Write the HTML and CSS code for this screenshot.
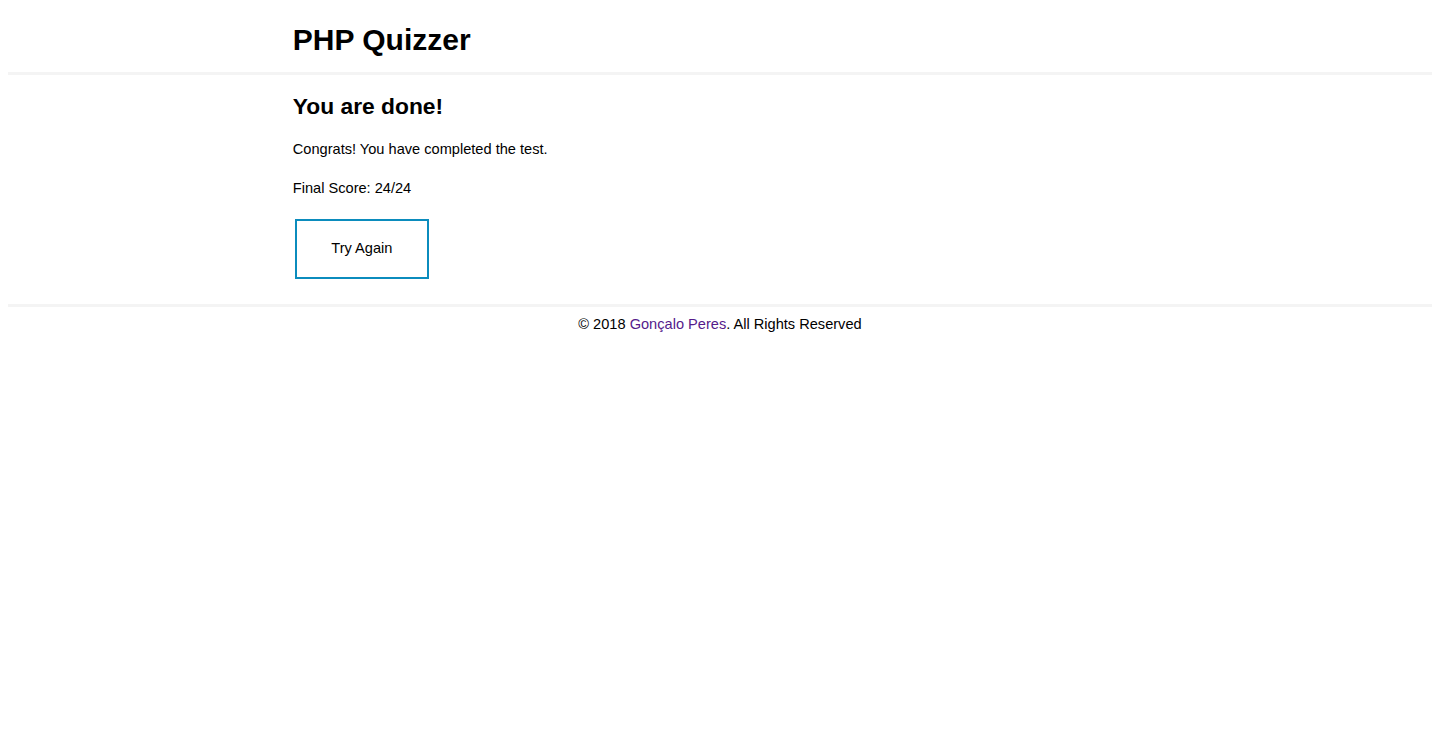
FILE: index.html
```html
<!DOCTYPE html>
<html lang="en">
<head>
<meta charset="utf-8">
<title>PHP Quizzer</title>
<link rel="stylesheet" href="styles.css">
</head>
<body>
<header class="site-header">
  <div class="container">
    <h1 class="site-title">PHP Quizzer</h1>
  </div>
</header>
<main class="content">
  <div class="container">
    <h2 class="done-title">You are done!</h2>
    <p class="text">Congrats! You have completed the test.</p>
    <p class="text">Final Score: 24/24</p>
    <div class="actions">
      <a class="btn" href="#">Try Again</a>
    </div>
  </div>
</main>
<footer class="site-footer">
  <div class="container footer-inner">
    &copy; 2018 <a class="footer-link" href="#">Gonçalo Peres</a>. All Rights Reserved
  </div>
</footer>
</body>
</html>
```
FILE: styles.css
```css
html, body {
  background: #ffffff;
}
body {
  margin: 8px;
  font-family: "Liberation Sans", Arial, sans-serif;
  font-size: 14.6px;
  color: #000000;
}
.container {
  width: 60%;
  margin: 0 auto;
}
.site-header {
  padding: 15px 0 14.5px;
  border-bottom: 3px solid #f4f4f4;
}
.site-title {
  margin: 0;
  font-size: 30px;
  font-weight: bold;
  line-height: 34.5px;
}
.content {
  padding: 18px 0 25px;
}
.done-title {
  margin: 0 0 22px;
  font-size: 22.8px;
  font-weight: bold;
  line-height: 26px;
}
.text {
  margin: 0 0 22px;
  line-height: 16.8px;
}
.actions {
  display: flex;
  padding-left: 2px;
}
.btn {
  display: block;
  padding: 19.6px 34.5px;
  border: 2px solid #0b8cbd;
  background: #ffffff;
  color: #000000;
  text-decoration: none;
  line-height: 16.8px;
}
.site-footer {
  border-top: 3px solid #f4f4f4;
  padding-top: 9px;
}
.footer-inner {
  text-align: center;
  line-height: 16.8px;
}
.footer-link {
  color: #551a8b;
  text-decoration: none;
}
```
